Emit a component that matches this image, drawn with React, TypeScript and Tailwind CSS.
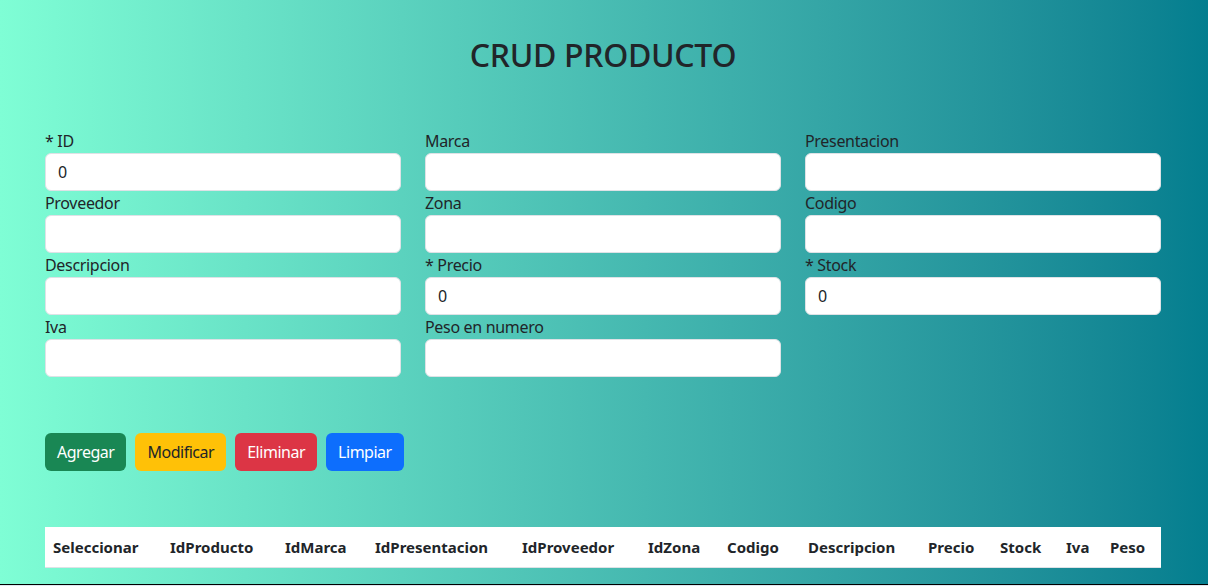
const fields: { label: string; value?: string }[] = [
  { label: "* ID", value: "0" },
  { label: "Marca" },
  { label: "Presentacion" },
  { label: "Proveedor" },
  { label: "Zona" },
  { label: "Codigo" },
  { label: "Descripcion" },
  { label: "* Precio", value: "0" },
  { label: "* Stock", value: "0" },
  { label: "Iva" },
  { label: "Peso en numero" },
];

// anchos de columna tomados del layout original
const columns: { name: string; width: number }[] = [
  { name: "Seleccionar", width: 117 },
  { name: "IdProducto", width: 115 },
  { name: "IdMarca", width: 90 },
  { name: "IdPresentacion", width: 147 },
  { name: "IdProveedor", width: 126 },
  { name: "IdZona", width: 79 },
  { name: "Codigo", width: 81 },
  { name: "Descripcion", width: 120 },
  { name: "Precio", width: 72 },
  { name: "Stock", width: 66 },
  { name: "Iva", width: 44 },
  { name: "Peso", width: 59 },
];

export default function App() {
  return (
    <div
      className="w-[1208px] text-[#212529] tracking-[-0.02em]"
      style={{ fontFamily: '"Segoe UI", "Noto Sans", "Liberation Sans", sans-serif' }}
    >
      <div className="h-[584px] bg-gradient-to-r from-[#7ffed5] to-[#037e8f] pt-[36px]">
        <div className="ml-[45px] w-[1116px]">
          <h2 className="text-center text-[32px] font-medium leading-[1.2] mb-[55px]">CRUD PRODUCTO</h2>

          <div className="grid grid-cols-3 gap-x-6">
            {fields.map((f) => (
              <div key={f.label} className="flex flex-col">
                <label className="text-base leading-6">{f.label}</label>
                <input
                  readOnly
                  value={f.value ?? ""}
                  className="h-[38px] w-full rounded-[6px] border border-[#dee2e6] bg-white px-3 text-base text-[#212529] outline-none"
                />
              </div>
            ))}
          </div>

          <div className="mt-[56px] flex gap-[9px] tracking-[-0.03em]">
            <button className="h-[38px] rounded-[6px] bg-[#198754] px-3 text-base text-white">Agregar</button>
            <button className="h-[38px] rounded-[6px] bg-[#ffc107] px-3 text-base text-[#212529]">Modificar</button>
            <button className="h-[38px] rounded-[6px] bg-[#dc3545] px-3 text-base text-white">Eliminar</button>
            <button className="h-[38px] rounded-[6px] bg-[#0d6efd] px-3 text-base text-white">Limpiar</button>
          </div>

          <table className="mt-[56px] w-full table-fixed border-collapse bg-white">
            <colgroup>
              {columns.map((c) => (
                <col key={c.name} style={{ width: c.width }} />
              ))}
            </colgroup>
            <thead>
              <tr className="border-b border-[#dee2e6]">
                {columns.map((c) => (
                  <th key={c.name} className="whitespace-nowrap p-2 text-left text-[15px] font-bold leading-6 tracking-normal">
                    {c.name}
                  </th>
                ))}
              </tr>
            </thead>
          </table>
        </div>
      </div>
      <div className="h-px bg-black" />
      <div className="h-px bg-[#dfe8f0]" />
    </div>
  );
}
